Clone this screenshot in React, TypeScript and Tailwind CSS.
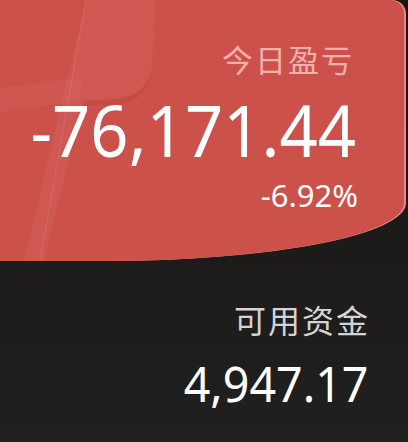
import React from "react";

const sans = "font-['Noto_Sans','Noto_Sans_CJK_SC',sans-serif]";

function Ribbon() {
  return (
    <svg className="absolute inset-0 h-full w-full" viewBox="0 0 404 261" preserveAspectRatio="none">
      <path d="M86 0 L156 0 L152 68 Q148 94 118 99 L84 101 L44 261 L24 261 Z" fill="#ffffff" opacity="0.045" />
      <path d="M0 88 L82 78 L80 100 L0 112 Z" fill="#ffffff" opacity="0.035" />
      <path d="M84 101 L118 99 Q146 95 152 68 Q150 100 120 104 L83 106 Z" fill="#8a1f1c" opacity="0.12" />
      <path d="M86 0 L40 261" stroke="#ffffff" strokeWidth="1" opacity="0.1" />
    </svg>
  );
}

export default function App() {
  return (
    <div className={`h-[442px] w-[408px] overflow-hidden bg-gradient-to-b from-[#191413] to-[#202020] ${sans}`}>
      <div className="relative h-[261px] w-[404px] rounded-tr-[14px] rounded-br-[300px_58px] bg-[#cd514b] shadow-[2px_0_0_#e58a88]">
        <Ribbon />
        <div className="relative flex flex-col items-end pr-[50px] pt-[40px]">
          <div className="text-[31px] leading-[40px] tracking-[2px] text-[#f1b0ab]">今日盈亏</div>
          <div className="mt-[13px] mr-[-2px] origin-right scale-x-[0.93] text-[72px] leading-[72px] font-normal text-white">
            -76,171.44
          </div>
          <div className="mt-[15px] mr-[-4px] text-[31px] leading-[30px] text-white">-6.92%</div>
        </div>
      </div>
      <div className="flex flex-col items-end pr-[38px] pt-[40px]">
        <div className="text-[32px] leading-[40px] tracking-[2px] text-[#d4d4d4]">可用资金</div>
        <div className="mt-[17px] mr-[2px] origin-right scale-x-[0.95] text-[49px] leading-[50px] font-normal text-white">
          4,947.17
        </div>
      </div>
    </div>
  );
}
